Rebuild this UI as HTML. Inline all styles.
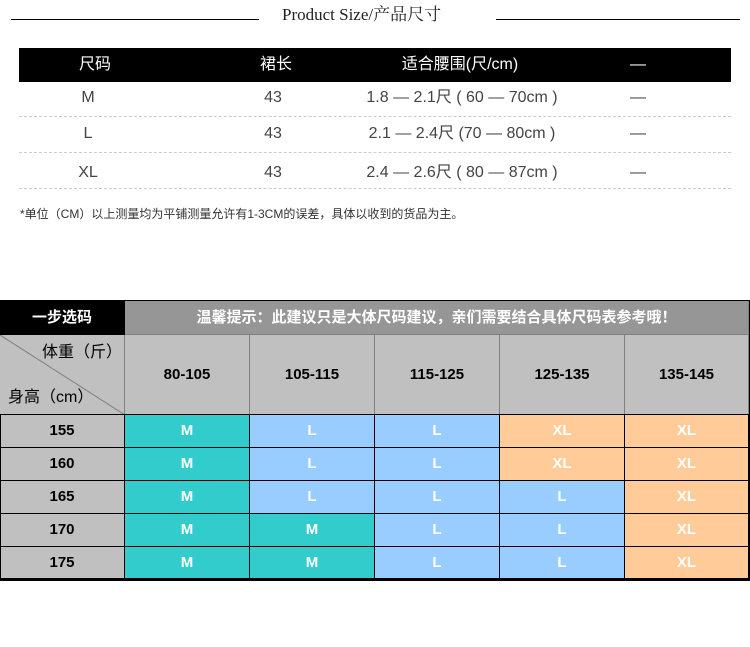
<!DOCTYPE html>
<html><head><meta charset="utf-8"><style>
*{margin:0;padding:0;box-sizing:border-box}
body{width:750px;height:647px;background:#fff;position:relative;overflow:hidden;font-family:"Liberation Sans","Noto Sans CJK SC",sans-serif}
.a{position:absolute;line-height:20px}
.t{position:absolute;text-align:center;font-size:16px;line-height:20px;color:#444;transform:translateX(-50%);white-space:nowrap}
.dl{position:absolute;left:19px;width:712px;border-top:1px dashed #ccc}
.c{position:absolute;display:flex;align-items:center;justify-content:center;font-weight:bold;font-size:15px;line-height:18px;border-right:1px solid #000;border-bottom:1px solid #000}
.w{color:#fff}
</style></head><body>
<div class="a" style="left:11px;top:19px;width:248px;border-top:1px solid #000"></div>
<div class="a" style="left:496px;top:19px;width:244px;border-top:1px solid #000"></div>
<div class="a" style="left:282px;top:5px;font-family:'Liberation Serif','Noto Serif CJK SC',serif;font-size:17px;color:#222">Product Size/产品尺寸</div>
<div class="a" style="left:19px;top:48px;width:712px;height:34px;background:#000"></div>
<div class="t" style="left:95px;top:55px;color:#fff">尺码</div>
<div class="t" style="left:276px;top:55px;color:#fff">裙长</div>
<div class="t" style="left:460px;top:55px;color:#fff">适合腰围(尺/cm)</div>
<div class="t" style="left:638px;top:55px;color:#fff">—</div>
<div class="t" style="left:88px;top:88px">M</div><div class="t" style="left:273px;top:88px">43</div><div class="t" style="left:462px;top:88px">1.8 — 2.1尺 ( 60 — 70cm )</div><div class="t" style="left:638px;top:88px">—</div>
<div class="dl" style="top:116px"></div>
<div class="t" style="left:88px;top:124px">L</div><div class="t" style="left:273px;top:124px">43</div><div class="t" style="left:462px;top:124px">2.1 — 2.4尺 (70 — 80cm )</div><div class="t" style="left:638px;top:124px">—</div>
<div class="dl" style="top:152px"></div>
<div class="t" style="left:88px;top:163px">XL</div><div class="t" style="left:273px;top:163px">43</div><div class="t" style="left:462px;top:163px">2.4 — 2.6尺 ( 80 — 87cm )</div><div class="t" style="left:638px;top:163px">—</div>
<div class="dl" style="top:188px"></div>
<div class="a" style="left:20px;top:204px;font-size:12px;color:#333">*单位（CM）以上测量均为平铺测量允许有1-3CM的误差，具体以收到的货品为主。</div>

<div class="a" style="left:0;top:300px;width:750px;height:281px;border:2px solid #000;border-left:1px solid #000;border-right:2px solid #000"></div>
<div class="c w" style="left:0;top:301px;width:125px;height:34px;background:#000;border-color:#000">一步选码</div>
<div class="c w" style="left:125px;top:301px;width:624px;height:34px;background:#969696;border-color:#808080">温馨提示：此建议只是大体尺码建议，亲们需要结合具体尺码表参考哦！</div>
<div class="c" style="left:0;top:335px;width:125px;height:80px;background:#c0c0c0;border-color:#808080"></div>
<svg class="a" style="left:0;top:335px" width="125" height="80"><line x1="0" y1="0" x2="125" y2="80" stroke="#808080"/></svg>
<div class="a" style="left:42px;top:343px;font-size:16px;color:#000">体重（斤）</div>
<div class="a" style="left:8px;top:388px;font-size:16px;color:#000">身高（cm）</div>
<div class="c" style="left:125px;top:335px;width:125px;height:80px;background:#c0c0c0;border-color:#808080">80-105</div>
<div class="c" style="left:250px;top:335px;width:125px;height:80px;background:#c0c0c0;border-color:#808080">105-115</div>
<div class="c" style="left:375px;top:335px;width:125px;height:80px;background:#c0c0c0;border-color:#808080">115-125</div>
<div class="c" style="left:500px;top:335px;width:125px;height:80px;background:#c0c0c0;border-color:#808080">125-135</div>
<div class="c" style="left:625px;top:335px;width:124px;height:80px;background:#c0c0c0;border-color:#808080">135-145</div>
<div class="c" style="left:0;top:414px;width:125px;height:34px;background:#c0c0c0;border-top:1px solid #000">155</div>
<div class="c w" style="left:125px;top:414px;width:125px;height:34px;background:#33cccc;border-top:1px solid #000">M</div>
<div class="c w" style="left:250px;top:414px;width:125px;height:34px;background:#99ccff;border-top:1px solid #000">L</div>
<div class="c w" style="left:375px;top:414px;width:125px;height:34px;background:#99ccff;border-top:1px solid #000">L</div>
<div class="c w" style="left:500px;top:414px;width:125px;height:34px;background:#ffcc99;border-top:1px solid #000">XL</div>
<div class="c w" style="left:625px;top:414px;width:124px;height:34px;background:#ffcc99;border-top:1px solid #000">XL</div>

<div class="c" style="left:0;top:448px;width:125px;height:33px;background:#c0c0c0">160</div>
<div class="c w" style="left:125px;top:448px;width:125px;height:33px;background:#33cccc">M</div>
<div class="c w" style="left:250px;top:448px;width:125px;height:33px;background:#99ccff">L</div>
<div class="c w" style="left:375px;top:448px;width:125px;height:33px;background:#99ccff">L</div>
<div class="c w" style="left:500px;top:448px;width:125px;height:33px;background:#ffcc99">XL</div>
<div class="c w" style="left:625px;top:448px;width:124px;height:33px;background:#ffcc99">XL</div>

<div class="c" style="left:0;top:481px;width:125px;height:33px;background:#c0c0c0">165</div>
<div class="c w" style="left:125px;top:481px;width:125px;height:33px;background:#33cccc">M</div>
<div class="c w" style="left:250px;top:481px;width:125px;height:33px;background:#99ccff">L</div>
<div class="c w" style="left:375px;top:481px;width:125px;height:33px;background:#99ccff">L</div>
<div class="c w" style="left:500px;top:481px;width:125px;height:33px;background:#99ccff">L</div>
<div class="c w" style="left:625px;top:481px;width:124px;height:33px;background:#ffcc99">XL</div>

<div class="c" style="left:0;top:514px;width:125px;height:33px;background:#c0c0c0">170</div>
<div class="c w" style="left:125px;top:514px;width:125px;height:33px;background:#33cccc">M</div>
<div class="c w" style="left:250px;top:514px;width:125px;height:33px;background:#33cccc">M</div>
<div class="c w" style="left:375px;top:514px;width:125px;height:33px;background:#99ccff">L</div>
<div class="c w" style="left:500px;top:514px;width:125px;height:33px;background:#99ccff">L</div>
<div class="c w" style="left:625px;top:514px;width:124px;height:33px;background:#ffcc99">XL</div>

<div class="c" style="left:0;top:547px;width:125px;height:33px;background:#c0c0c0;border-bottom:2px solid #000">175</div>
<div class="c w" style="left:125px;top:547px;width:125px;height:33px;background:#33cccc;border-bottom:2px solid #000">M</div>
<div class="c w" style="left:250px;top:547px;width:125px;height:33px;background:#33cccc;border-bottom:2px solid #000">M</div>
<div class="c w" style="left:375px;top:547px;width:125px;height:33px;background:#99ccff;border-bottom:2px solid #000">L</div>
<div class="c w" style="left:500px;top:547px;width:125px;height:33px;background:#99ccff;border-bottom:2px solid #000">L</div>
<div class="c w" style="left:625px;top:547px;width:124px;height:33px;background:#ffcc99;border-bottom:2px solid #000">XL</div>
<div class="a" style="left:0;top:414px;width:1px;height:167px;background:#000"></div>
</body></html>
